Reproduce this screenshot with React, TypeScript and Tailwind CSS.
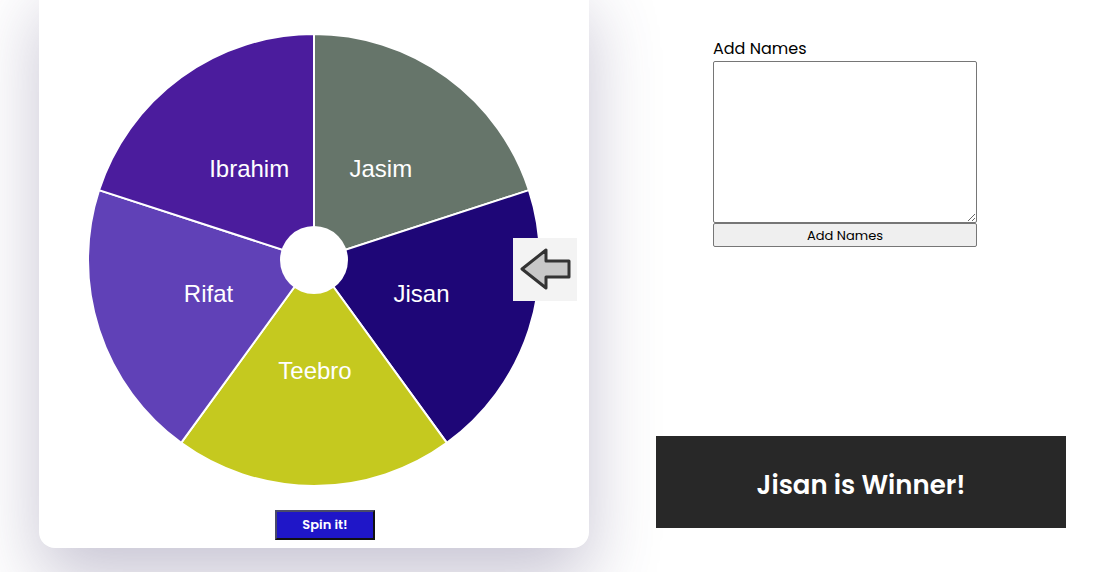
import React from "react";

const CX = 230;
const CY = 230;
const R = 226;

const segs = [
  { name: "Jasim", from: -90, to: -18, color: "#66756a" },
  { name: "Jisan", from: -18, to: 54, color: "#1e0677" },
  { name: "Teebro", from: 54, to: 126, color: "#c5c91f" },
  { name: "Rifat", from: 126, to: 198, color: "#6041b7" },
  { name: "Ibrahim", from: 198, to: 270, color: "#4b1c9d" },
];

function pt(deg: number, r: number) {
  const a = (deg * Math.PI) / 180;
  return [CX + r * Math.cos(a), CY + r * Math.sin(a)];
}

function Wheel() {
  return (
    <svg width={460} height={460} viewBox="0 0 460 460">
      {segs.map((s) => {
        const [x1, y1] = pt(s.from, R);
        const [x2, y2] = pt(s.to, R);
        return (
          <path
            key={s.name}
            d={`M${CX} ${CY} L${x1} ${y1} A${R} ${R} 0 0 1 ${x2} ${y2} Z`}
            fill={s.color}
            stroke="#ffffff"
            strokeWidth={2}
          />
        );
      })}
      {segs.map((s) => {
        const [x, y] = pt((s.from + s.to) / 2, 112);
        return (
          <text
            key={s.name + "t"}
            x={x + 1}
            y={y + 1}
            fill="#ffffff"
            fontSize={24}
            fontFamily="'Liberation Sans', Arial, sans-serif"
            textAnchor="middle"
            dominantBaseline="middle"
          >
            {s.name}
          </text>
        );
      })}
      <circle cx={CX} cy={CY} r={34} fill="#ffffff" />
    </svg>
  );
}

export default function App() {
  return (
    <div
      className="flex bg-white w-[1100px] h-[572px] overflow-hidden"
      style={{ fontFamily: "Poppins, Inter, 'Noto Sans', sans-serif" }}
    >
      <div className="ml-[39px] -mt-[20px] w-[550px] h-[568px] bg-white rounded-2xl shadow-[0_30px_70px_rgba(70,60,110,0.3)] flex flex-col items-center pt-[50px] shrink-0">
        <div className="relative w-[460px] h-[460px]">
          <Wheel />
          <div className="absolute left-[429px] top-[208px] w-[64px] h-[63px] bg-[#f3f3f3] flex items-center justify-center">
            <svg width={64} height={63} viewBox="0 0 64 63">
              <path
                d="M9 31 L33 12 L33 23 L56 23 L56 39 L33 39 L33 50 Z"
                fill="#c8c8c8"
                stroke="#333333"
                strokeWidth={3}
                strokeLinejoin="round"
              />
            </svg>
          </div>
        </div>
        <button className="mt-[20px] ml-[22px] w-[100px] h-[30px] bg-[#1f16c8] border-2 border-t-[#4a4a6a] border-l-[#4a4a6a] border-r-[#111] border-b-[#111] text-white text-[13px] font-semibold">
          Spin it!
        </button>
      </div>
      <div className="ml-[67px] w-[410px] flex flex-col">
        <div className="ml-[57px] mt-[39px] w-[264px] flex flex-col">
          <label className="text-[16px] text-black leading-[20px] mb-[2px]">Add Names</label>
          <textarea className="w-[264px] h-[162px] border border-[#767676] rounded-[2px] bg-white resize-y" />
          <button className="w-[264px] h-[24px] bg-[#efefef] border border-[#767676] rounded-[2px] text-[13px] text-black leading-none">
            Add Names
          </button>
        </div>
        <div className="mt-[189px] w-[410px] h-[92px] bg-[#282828] flex items-center justify-center pt-[6px]">
          <span className="text-white text-[26px] font-semibold">Jisan is Winner!</span>
        </div>
      </div>
    </div>
  );
}
